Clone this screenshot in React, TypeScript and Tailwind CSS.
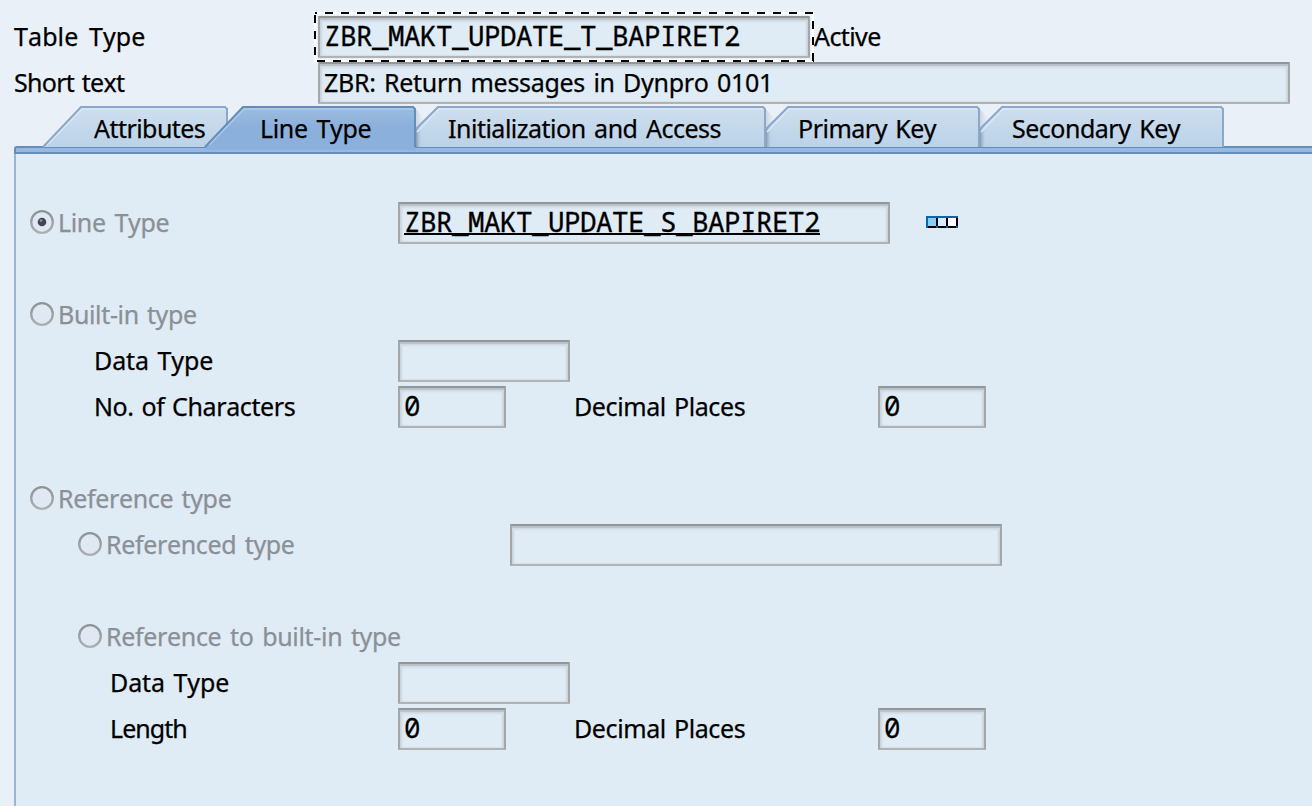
import type { ReactNode } from "react";

const fieldBox =
  "h-[42px] shrink-0 border-2 border-t-[#929698] border-x-[#a3a7aa] border-b-[#b0b2b4] rounded-[1px] bg-[#dfebf5] shadow-[inset_0_2px_1px_#b9c1c9,inset_0_4px_2px_#d3dde6,inset_2px_0_2px_#ccd5dd,inset_-2px_0_2px_#ccd5dd]";
const mono =
  "font-['Noto_Sans_Mono','DejaVu_Sans_Mono',monospace] text-[27.5px] tracking-[-0.5px] text-black leading-[46px] [-webkit-text-stroke:0.3px_black]";

function Field({ width, children, className = "" }: { width: string; children?: ReactNode; className?: string }) {
  return <div className={`${fieldBox} ${width} ${className} flex items-center pl-1 whitespace-pre`}>{children}</div>;
}

function Mono({ children, underline = false }: { children: string; underline?: boolean }) {
  return (
    <span className={`${mono} relative -top-px block`}>
      {children}
      {underline && <span className="absolute left-0 right-0 top-[34px] h-[2px] bg-black" />}
    </span>
  );
}

function Label({ text, spacing, className = "" }: { text: string; spacing: string; className?: string }) {
  return (
    <span className={`${spacing} ${className} relative -top-px shrink-0 whitespace-pre [-webkit-text-stroke:0.25px_currentColor]`}>
      {text}
    </span>
  );
}

function Radio({ checked = false }: { checked?: boolean }) {
  return (
    <svg className="relative -top-px shrink-0" width="24" height="24" viewBox="0 0 24 24">
      <defs>
        <linearGradient id="radio-ring" x1="0" y1="0" x2="0" y2="1">
          <stop offset="0" stopColor="#8f9396" />
          <stop offset="1" stopColor="#acafb1" />
        </linearGradient>
      </defs>
      <circle cx="12" cy="12" r="10.8" fill="#e0e9f3" stroke="url(#radio-ring)" strokeWidth="2.3" />
      {checked && <circle cx="12" cy="12" r="4.3" fill="#44445c" />}
      {checked && <circle cx="11" cy="10.6" r="1.4" fill="#8c8ea0" />}
    </svg>
  );
}

function RadioRow({ text, spacing, indent, checked, children }: { text: string; spacing: string; indent: string; checked?: boolean; children?: ReactNode }) {
  return (
    <div className={`flex h-[46px] items-center ${indent}`}>
      <div className="flex w-0 items-center">
        <Radio checked={checked} />
        <Label text={text} spacing={spacing} className="pl-[4px] text-[#8b9096]" />
      </div>
      {children}
    </div>
  );
}

function NumberRow({ text, spacing, indent, labelWidth }: { text: string; spacing: string; indent: string; labelWidth: string }) {
  return (
    <div className={`flex h-[46px] items-center ${indent}`}>
      <div className={`${labelWidth} flex shrink-0`}>
        <Label text={text} spacing={spacing} />
      </div>
      <Field width="w-[108px]"><Mono>0</Mono></Field>
      <div className="flex w-[372px] shrink-0 pl-[68px]">
        <Label text="Decimal Places" spacing="tracking-[-0.4px] [word-spacing:2px]" />
      </div>
      <Field width="w-[108px]"><Mono>0</Mono></Field>
    </div>
  );
}

function Tab({ text, spacing, width, pad, shape, active = false, shadow = false, className = "" }: {
  text: string; spacing: string; width: number; pad: string; shape: "full" | "cut"; active?: boolean; shadow?: boolean; className?: string;
}) {
  const w = width;
  const fill = shape === "full" ? `M1 41 L39 1 H${w - 3} L${w - 1} 3 V41 Z` : `M0 41 V23 L22 1 H${w - 3} L${w - 1} 3 V41 Z`;
  const line = shape === "full" ? `M1 41 L39 1 H${w - 3} L${w - 1} 3 V41` : `M0 23 L22 1 H${w - 3} L${w - 1} 3 V41`;
  const light = shape === "full" ? `M5 39 L40 3 H${w - 3}` : `M1 26 L23 3 H${w - 3}`;
  const id = `tab-${text.replace(/ /g, "-")}`;
  return (
    <div className={`relative flex h-[46px] shrink-0 ${pad} ${className}`}>
      <svg className="absolute left-0 top-0" width={w} height="44" viewBox={`0 0 ${w} 44`}>
        <defs>
          <linearGradient id={id} x1="0" y1="0" x2="0" y2="1">
            <stop offset="0" stopColor={active ? "#9dbde0" : "#cedfee"} />
            <stop offset={active ? "0.5" : "1"} stopColor={active ? "#8cb0dc" : "#bbd2e8"} />
          </linearGradient>
          <linearGradient id={`${id}-s`} x1="0" y1="0" x2="1" y2="0">
            <stop offset="0" stopColor="#8698ac" />
            <stop offset="1" stopColor="#bbd2e8" stopOpacity="0" />
          </linearGradient>
        </defs>
        {shadow && <path d="M0 3 V23 L9 14 Z" fill={`url(#${id}-s)`} opacity="0.3" />}
        <path d={fill} fill={`url(#${id})`} />
        {active && <path d={`M1 40 H${w - 1} V44 H3 Z`} fill="#8cb0dc" />}
        {shadow && <path d="M0 23 L6 17 V41 H0 Z" fill={`url(#${id}-s)`} />}
        <path d={light} fill="none" stroke={active ? "#aecbe8" : "#dbe8f4"} strokeWidth="1.6" />
        <path d={line} fill="none" stroke={active ? "#648dbb" : "#8ba8ca"} strokeWidth="2" />
      </svg>
      <span className="relative leading-[46px]"><Label text={text} spacing={spacing} /></span>
    </div>
  );
}

function FocusFrame() {
  return (
    <svg className="absolute -left-[4px] -top-[4px]" width="500" height="50" viewBox="0 0 500 50">
      <path d="M1 1 H499 V49 H1 Z" fill="none" stroke="#ffffff" strokeWidth="3" />
      <path d="M1 1 H3" stroke="#000" strokeWidth="2" />
      <path d="M11 1 H499" stroke="#000" strokeWidth="2" strokeDasharray="8 8" />
      <path d="M1 3 V50" stroke="#000" strokeWidth="2" strokeDasharray="8 8" />
      <path d="M3 49 H500" stroke="#000" strokeWidth="2" strokeDasharray="8 8" />
      <path d="M499 9 V50" stroke="#000" strokeWidth="2" strokeDasharray="8 8" />
    </svg>
  );
}

function StructureIcon() {
  return (
    <svg className="relative -top-px ml-9 shrink-0" width="32" height="12" viewBox="0 0 32 12" shapeRendering="crispEdges">
      <rect width="32" height="12" fill="#000" />
      <path d="M0 0H32V2H2V12H0Z M10 10h2v2h-2z M20 10h2v2h-2z M30 10h2v2h-2z" fill="#0068ad" />
      <rect x="2" y="2" width="8" height="8" fill="#8ecbf0" />
      <rect x="12" y="2" width="8" height="8" fill="#dcebf9" />
      <rect x="22" y="2" width="8" height="8" fill="#fff" />
    </svg>
  );
}

export default function App() {
  return (
    <div className="flex h-[806px] w-[1312px] flex-col overflow-hidden bg-[#e9f0f7] pt-[14px] font-['Noto_Sans',sans-serif] text-[25px] leading-[46px] text-black [font-kerning:none]">
      <div className="flex h-[46px] items-center pl-[14px]">
        <div className="flex w-[304px]"><Label text="Table Type" spacing="tracking-[0.1px] [word-spacing:4px]" /></div>
        <div className="relative">
          <Field width="w-[492px]"><Mono>ZBR_MAKT_UPDATE_T_BAPIRET2</Mono></Field>
          <FocusFrame />
        </div>
        <Label text="Active" spacing="tracking-[-0.6px]" className="pl-[4px]" />
      </div>
      <div className="flex h-[46px] items-center pl-[14px]">
        <div className="flex w-[304px]"><Label text="Short text" spacing="tracking-[-0.7px] [word-spacing:1.8px]" /></div>
        <Field width="w-[972px]"><Label text="ZBR: Return messages in Dynpro 0101" spacing="tracking-[-0.3px] [word-spacing:2.2px]" /></Field>
      </div>
      <div className="flex h-[40px] pl-[42px]">
        <Tab text="Attributes" spacing="tracking-[-0.55px]" width={186} pad="w-[162px] pl-[52px]" shape="full" />
        <Tab text="Line Type" spacing="tracking-[-0.35px] [word-spacing:2.7px]" width={212} pad="w-[212px] pl-[56px]" shape="full" active className="z-10" />
        <Tab text="Initialization and Access" spacing="tracking-[-0.5px] [word-spacing:2.5px]" width={350} pad="w-[350px] pl-[32px]" shape="cut" shadow />
        <Tab text="Primary Key" spacing="tracking-[-0.5px] [word-spacing:2.3px]" width={214} pad="w-[214px] pl-[32px]" shape="cut" shadow />
        <Tab text="Secondary Key" spacing="tracking-[-0.5px] [word-spacing:2.8px]" width={244} pad="w-[244px] pl-[32px]" shape="cut" shadow />
      </div>
      <div className="ml-[14px] h-2 shrink-0 rounded-tl-[3px] border-y-2 border-l-2 border-[#648dbb] bg-[#98b9df]" />
      <div className="ml-[14px] flex-1 border-l-2 border-[#98b5d8] bg-[#dfebf5] pt-[46px]">
        <RadioRow text="Line Type" spacing="tracking-[-0.35px] [word-spacing:2.7px]" indent="pl-[14px]" checked>
          <Field width="w-[492px]" className="ml-[368px]"><Mono underline>ZBR_MAKT_UPDATE_S_BAPIRET2</Mono></Field>
          <StructureIcon />
        </RadioRow>
        <div className="h-[46px]" />
        <RadioRow text="Built-in type" spacing="tracking-[-0.35px] [word-spacing:2px]" indent="pl-[14px]" />
        <div className="flex h-[46px] items-center pl-[78px]">
          <div className="w-[304px]"><Label text="Data Type" spacing="tracking-[-0.1px] [word-spacing:2.2px]" /></div>
          <Field width="w-[172px]" />
        </div>
        <NumberRow text="No. of Characters" spacing="tracking-[-0.38px] [word-spacing:1.6px]" indent="pl-[78px]" labelWidth="w-[304px]" />
        <div className="h-[46px]" />
        <RadioRow text="Reference type" spacing="tracking-[-0.35px] [word-spacing:2.2px]" indent="pl-[14px]" />
        <RadioRow text="Referenced type" spacing="tracking-[-0.35px] [word-spacing:2.4px]" indent="pl-[62px]">
          <Field width="w-[492px]" className="ml-[432px]" />
        </RadioRow>
        <div className="h-[46px]" />
        <RadioRow text="Reference to built-in type" spacing="tracking-[-0.33px] [word-spacing:2.5px]" indent="pl-[62px]" />
        <div className="flex h-[46px] items-center pl-[94px]">
          <div className="w-[288px]"><Label text="Data Type" spacing="tracking-[-0.1px] [word-spacing:2.2px]" /></div>
          <Field width="w-[172px]" />
        </div>
        <NumberRow text="Length" spacing="tracking-[-0.95px]" indent="pl-[94px]" labelWidth="w-[288px]" />
      </div>
    </div>
  );
}
